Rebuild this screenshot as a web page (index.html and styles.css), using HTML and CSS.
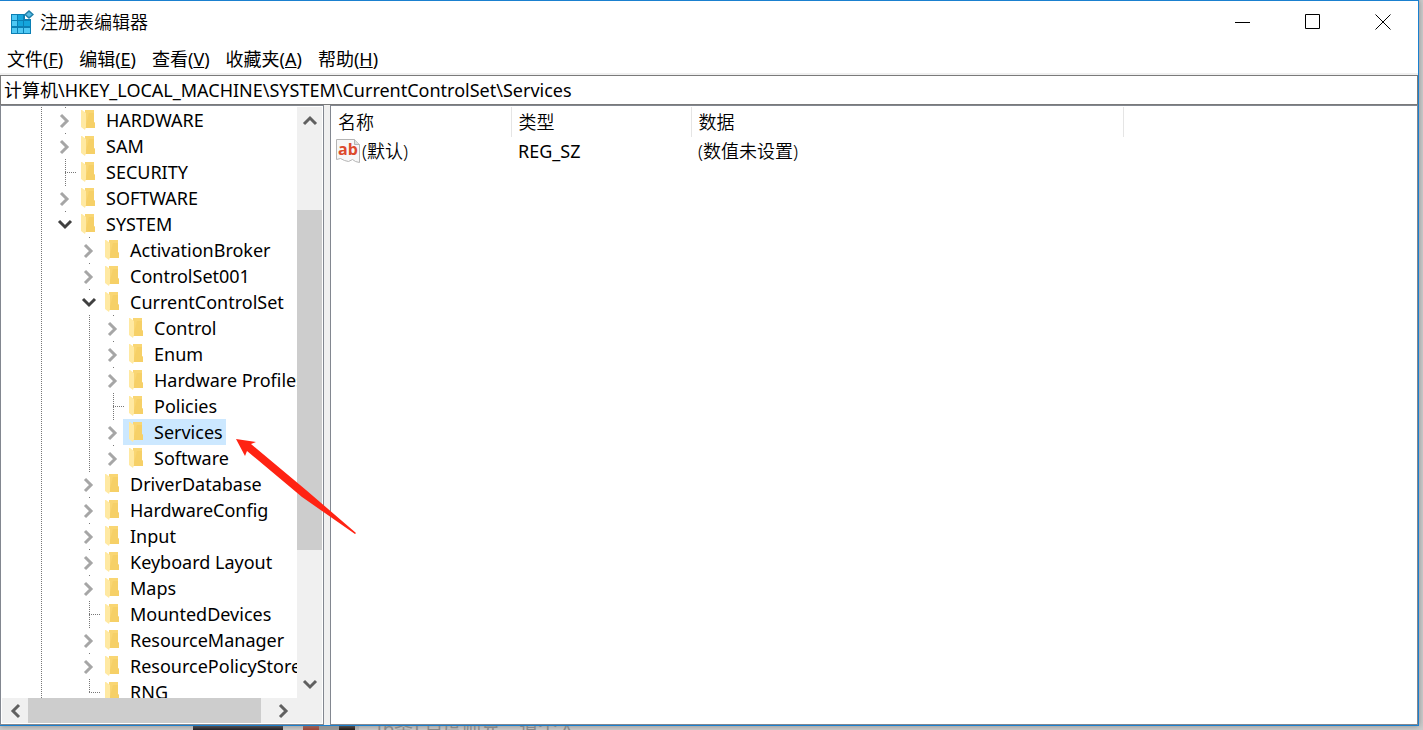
FILE: index.html
```html
<!DOCTYPE html>
<html lang="zh-CN">

<head>
    <meta charset="UTF-8">
    <meta name="viewport" content="width=device-width, initial-scale=1.0">
    <title>注册表编辑器</title>
    <link rel="stylesheet" href="styles.css">
</head>

<body>
    <svg class="symbols" aria-hidden="true">
        <symbol id="folder" viewBox="0 0 14 20">
            <path d="M4 0h9v12l1 1v5H4z" fill="#f9d673" />
            <path d="M8 3h5v9l1 1v5H4z" fill="#f5cd62" opacity=".7" />
            <path d="M0 0h1l4 3v14l-1 3-4-3z" fill="#ffe9a2" />
        </symbol>
        <symbol id="chevron" viewBox="0 0 16 16">
            <path d="M4 2l6 6-6 6" fill="none" stroke="currentColor" stroke-width="3" />
        </symbol>
    </svg>

    <div class="window">
        <header class="title-bar">
            <svg class="app-icon" viewBox="0 0 24 24" aria-hidden="true">
                <path d="M1 4h14v5h6v15H1z" fill="#0b7fb4" />
                <path d="M2 5h5v5H2zM2 11h5v5H2zM2 18h5v5H2zM8 18h5v5H8zM14 18h6v5h-6z" fill="#4fc8f4" />
                <path d="M8 5h5v5H8zM8 11h5v5H8zM14 11h6v5h-6z" fill="#14a5dc" />
                <path d="M19 0l5 4.500-5 4.500-5-4.500z" fill="#1f7ea8" />
                <path d="M19 2l3 2.500-3 2.500-3-2.500z" fill="#58bce4" />
            </svg>
            <h1>注册表编辑器</h1>
            <div class="window-buttons">
                <button type="button" aria-label="最小化">
                    <svg viewBox="0 0 16 16"><path d="M0 8.500h15" /></svg>
                </button>
                <button type="button" aria-label="最大化">
                    <svg viewBox="0 0 16 16"><path d="M.5.5h14v14H.5z" /></svg>
                </button>
                <button type="button" aria-label="关闭">
                    <svg viewBox="0 0 16 16"><path d="M.5.5l15 15M15.500.5l-15 15" /></svg>
                </button>
            </div>
        </header>

        <nav class="menu-bar">
            <button type="button">文件(<u>F</u>)</button>
            <button type="button">编辑(<u>E</u>)</button>
            <button type="button">查看(<u>V</u>)</button>
            <button type="button">收藏夹(<u>A</u>)</button>
            <button type="button">帮助(<u>H</u>)</button>
        </nav>

        <input class="address" type="text" aria-label="地址" value="计算机\HKEY_LOCAL_MACHINE\SYSTEM\CurrentControlSet\Services">

        <main>
            <section class="tree-pane">
                <div class="tree-view">
                    <ul class="tree" id="tree"></ul>
                </div>
                <div class="scrollbar vertical">
                    <button type="button" aria-label="向上滚动"><svg class="up"><use href="#chevron" /></svg></button>
                    <div class="track"><div class="thumb"></div></div>
                    <button type="button" aria-label="向下滚动"><svg class="down"><use href="#chevron" /></svg></button>
                </div>
                <div class="scrollbar horizontal">
                    <button type="button" aria-label="向左滚动"><svg class="left"><use href="#chevron" /></svg></button>
                    <div class="track"><div class="thumb"></div></div>
                    <button type="button" aria-label="向右滚动"><svg><use href="#chevron" /></svg></button>
                </div>
                <div class="corner"></div>
            </section>

            <section class="value-pane">
                <table>
                    <thead>
                        <tr>
                            <th class="name">名称</th>
                            <th class="type">类型</th>
                            <th class="data">数据</th>
                        </tr>
                    </thead>
                    <tbody>
                        <tr>
                            <td class="name-cell">
                                <div class="value-name">
                                    <svg class="value-icon" viewBox="0 0 24 24" aria-hidden="true">
                                        <path d="M.5.5h18l5 5v18l-4-1-3-2-4 2-4-1-4-2-4 1z" fill="#f7f7f7" stroke="#b5b5b5" />
                                        <path d="M18.500.5v5h5" fill="#ddd" stroke="#b5b5b5" />
                                        <text x="2" y="16">ab</text>
                                    </svg>
                                    (默认)
                                </div>
                            </td>
                            <td class="type-cell">REG_SZ</td>
                            <td>(数值未设置)</td>
                        </tr>
                    </tbody>
                </table>
            </section>
        </main>

        <svg class="pointer" viewBox="0 0 122 98" aria-hidden="true">
            <path d="M1 1l20 3-5 2 55 46 50 43-1 1-53-37-55-46-2 5z" fill="#ff2313" />
        </svg>
    </div>

    <div class="backdrop" aria-hidden="true">
        <span class="dark-block"></span>
        <span class="thumbnail"></span>
        <span class="snippet">[6条] 百度师兄：道个人...</span>
    </div>

    <script>
        const keys = [
            { name: 'HARDWARE', closed: true },
            { name: 'SAM', closed: true },
            { name: 'SECURITY' },
            { name: 'SOFTWARE', closed: true },
            {
                name: 'SYSTEM',
                children: [
                    { name: 'ActivationBroker', closed: true },
                    { name: 'ControlSet001', closed: true },
                    {
                        name: 'CurrentControlSet',
                        children: [
                            { name: 'Control', closed: true },
                            { name: 'Enum', closed: true },
                            { name: 'Hardware Profiles', closed: true },
                            { name: 'Policies' },
                            { name: 'Services', closed: true, selected: true },
                            { name: 'Software', closed: true }
                        ]
                    },
                    { name: 'DriverDatabase', closed: true },
                    { name: 'HardwareConfig', closed: true },
                    { name: 'Input', closed: true },
                    { name: 'Keyboard Layout', closed: true },
                    { name: 'Maps', closed: true },
                    { name: 'MountedDevices' },
                    { name: 'ResourceManager', closed: true },
                    { name: 'ResourcePolicyStore', closed: true },
                    { name: 'RNG' }
                ]
            }
        ];

        function renderKey(key) {
            let toggle = '<span class="branch"></span>';
            if (key.closed || key.children) {
                toggle = `<button type="button" class="toggle ${key.children ? 'open' : ''}" aria-label="${key.name}"><svg><use href="#chevron" /></svg></button>`;
            }
            const children = key.children ? `<ul>${key.children.map(renderKey).join('')}</ul>` : '';

            return `<li>
                <div class="row">
                    ${toggle}
                    <span class="key ${key.selected ? 'selected' : ''}"><svg><use href="#folder" /></svg>${key.name}</span>
                </div>
                ${children}
            </li>`;
        }

        document.getElementById('tree').innerHTML = keys.map(renderKey).join('');
    </script>
</body>

</html>
```
FILE: styles.css
```css
* {
    box-sizing: border-box;
    margin: 0;
    padding: 0;
}

body {
    height: 100vh;
    display: flex;
    flex-direction: column;
    overflow: hidden;
    background-color: #cdcdcd;
    color: #000;
    font-family: "Noto Sans", "Noto Sans CJK SC", sans-serif;
    font-size: 18px;
    line-height: 26px;
}

button,
input {
    border: none;
    background: none;
    color: inherit;
    font: inherit;
}

ul {
    list-style: none;
}

.symbols {
    display: none;
}

.window {
    position: relative;
    flex: 1;
    min-height: 0;
    margin-right: 4px;
    display: flex;
    flex-direction: column;
    background-color: #fff;
    border: 1px solid #1a80cf;
    border-left: none;
    box-shadow: 0 0 6px #888;
}

/* title and menu */

.title-bar {
    height: 44px;
    padding: 0 0 2px 10px;
    display: flex;
    align-items: center;
    gap: 6px;
}

.app-icon {
    width: 24px;
    height: 24px;
}

h1 {
    font-size: 18px;
    font-weight: 350;
}

.window-buttons {
    margin-left: auto;
    display: flex;
}

.window-buttons button {
    width: 70px;
    height: 42px;
    display: flex;
    align-items: center;
    justify-content: center;
}

.window-buttons svg {
    width: 16px;
    height: 16px;
    fill: none;
    stroke: #000;
}

.menu-bar {
    height: 30px;
    padding-left: 7px;
    display: flex;
    gap: 16px;
    border-bottom: 2px solid #f0f0f0;
}

.address {
    height: 30px;
    padding: 0 3px 2px;
    border: 1px solid #7a7a7a;
}

/* panes */

main {
    flex: 1;
    min-height: 0;
    display: flex;
    gap: 6px;
    background-color: #f0f0f0;
}

.tree-pane {
    width: 324px;
    padding: 1px;
    display: grid;
    grid-template-columns: 1fr 25px;
    grid-template-rows: minmax(0, 1fr) 25px;
    background-color: #fff;
    border: 1px solid #828790;
}

.tree-view {
    overflow: hidden;
    white-space: nowrap;
}

.tree {
    margin-left: 39px;
    padding-left: 16px;
    background: repeating-linear-gradient(#777 0 1px, #fff 1px 2px) left top / 1px 100% no-repeat;
}

.tree ul {
    padding-left: 24px;
}

.tree li {
    background: repeating-linear-gradient(#777 0 1px, #fff 1px 2px) 8px 0 / 1px 100% no-repeat;
}

.tree li:last-child {
    background-size: 1px 13px;
}

.row {
    height: 26px;
    display: flex;
    align-items: center;
}

.toggle {
    width: 16px;
    height: 24px;
    padding-top: 2px;
    margin-right: 2px;
    display: flex;
    align-items: center;
    background-color: #fff;
    color: #a6a6a6;
}

.toggle svg {
    width: 16px;
    height: 16px;
}

.toggle.open {
    color: #404040;
}

.toggle.open svg {
    transform: rotate(90deg);
}

.branch {
    width: 12px;
    height: 1px;
    margin-left: 8px;
    margin-right: -2px;
    background: repeating-linear-gradient(90deg, #777 0 1px, #fff 1px 2px);
}

.key {
    height: 26px;
    padding: 0 3px 0 6px;
    display: flex;
    align-items: center;
    gap: 11px;
}

.key svg {
    width: 14px;
    height: 20px;
}

.key.selected {
    background-color: #cce8ff;
}

/* scrollbars */

.scrollbar {
    display: flex;
    background-color: #f0f0f0;
}

.scrollbar button {
    flex: 0 0 26px;
    display: flex;
    align-items: center;
    justify-content: center;
    color: #606060;
}

.scrollbar svg {
    width: 16px;
    height: 16px;
}

.up {
    transform: rotate(-90deg);
}

.down {
    transform: rotate(90deg);
}

.left {
    transform: rotate(180deg);
}

.track {
    flex: 1;
    display: flex;
}

.thumb {
    background-color: #cdcdcd;
}

.vertical,
.vertical .track {
    flex-direction: column;
}

.vertical .thumb {
    height: 63%;
    margin-top: 77px;
}

.horizontal .thumb {
    width: 96%;
}

.corner {
    background-color: #f0f0f0;
}

/* values */

.value-pane {
    flex: 1;
    padding-top: 1px;
    background-color: #fff;
    border: 1px solid #828790;
}

table {
    table-layout: fixed;
    width: 793px;
    border-collapse: collapse;
}

th,
td {
    height: 30px;
    padding-left: 7px;
    text-align: left;
    font-weight: 350;
}

th {
    border-right: 1px solid #e5e5e5;
}

td {
    padding-bottom: 2px;
}

.name-cell {
    padding-left: 5px;
}

.type-cell {
    font-weight: 400;
}

.name,
.type {
    width: 180px;
}

.value-name {
    display: flex;
    align-items: center;
    gap: 2px;
}

.value-icon {
    width: 24px;
    height: 24px;
}

.value-icon text {
    fill: #dc4a2c;
    font: bold 16px "Open Sans", sans-serif;
}

.pointer {
    position: absolute;
    left: 235px;
    top: 437px;
    width: 122px;
    height: 98px;
}

/* page behind the window */

.backdrop {
    height: 4px;
    display: flex;
    overflow: hidden;
    color: #888;
    font-size: 19px;
    line-height: 4px;
}

.dark-block {
    width: 90px;
    margin-left: 193px;
    background-color: #1c1a20;
}

.thumbnail {
    width: 56px;
    margin: 0 18px 0 20px;
    background: linear-gradient(90deg, #a04030 0 16px, #999 16px 36px, #1c1410 36px 52px, #bbb 52px);
}
```
